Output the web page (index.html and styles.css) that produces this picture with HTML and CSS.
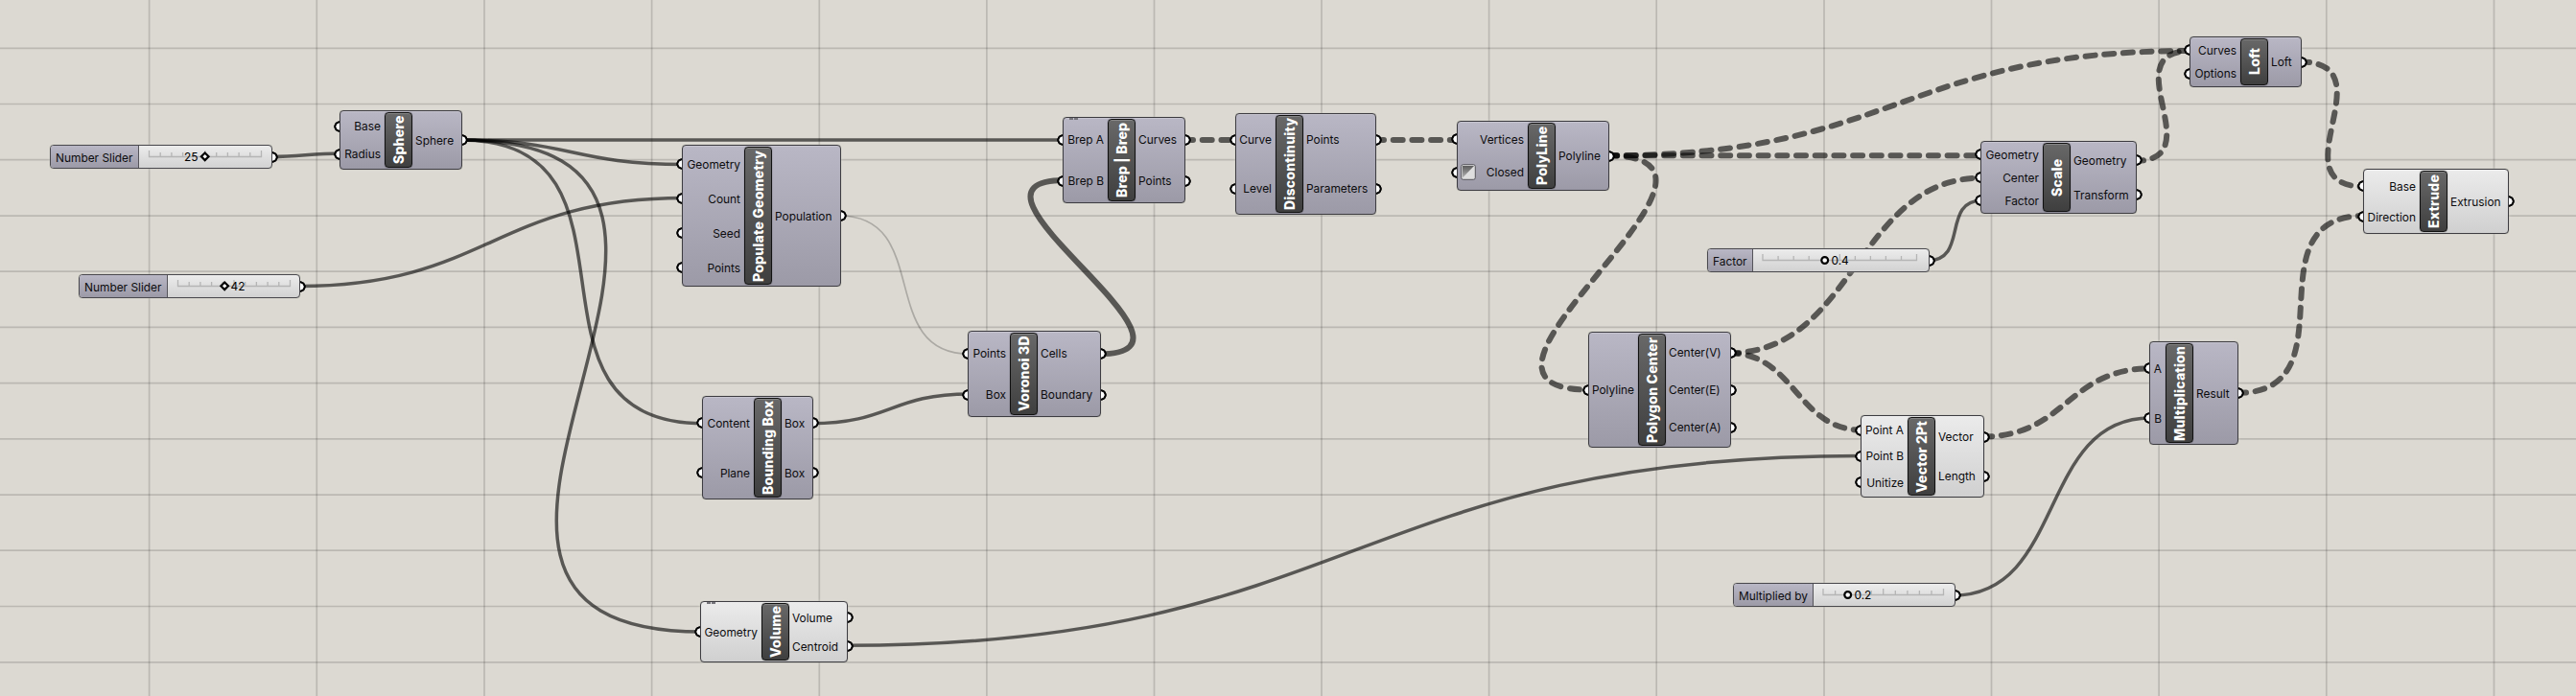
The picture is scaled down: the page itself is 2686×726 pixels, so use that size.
FILE: index.html
```html
<!DOCTYPE html>
<html lang="en">
<head>
<meta charset="utf-8">
<title>Node graph</title>
<link rel="stylesheet" href="styles.css">
</head>
<body>
<main class="canvas">
  <svg class="layer" width="2686" height="726" viewBox="0 0 2686 726">
    <path class="grid" d="M155.6 0V726M330.3 0V726M505 0V726M679.6 0V726M854.3 0V726M1028.9 0V726M1203.5 0V726M1378 0V726M1552.6 0V726M1727.2 0V726M1902 0V726M2076.5 0V726M2251.1 0V726M2425.8 0V726M2600.5 0V726"/>
    <path class="grid" d="M0 50.3H2686M0 108.5H2686M0 166.6H2686M0 225.2H2686M0 283.2H2686M0 341.4H2686M0 399.6H2686M0 457.8H2686M0 516.2H2686M0 574.2H2686M0 632.5H2686M0 690.8H2686"/>

    <g class="wire">
      <path d="M282 163.5C315 163.5 322 160 356 160"/>
      <path d="M312 298.5C508 298.5 516 206.5 713 206.5"/>
      <path d="M480 146H1110"/>
      <path d="M480 146C596 146 597 171.5 713 171.5"/>
      <path d="M480 146C693 146 521 441.7 734 441.7"/>
      <path d="M480 146C866 146 346 659 732 659"/>
      <path d="M846 441.7C928 441.7 929 411 1011 411"/>
      <path d="M882 673.3C1412 673.3 1411 475.5 1941 475.5"/>
      <path d="M2010 271.7C2053 271.7 2024 209 2067 209"/>
      <path d="M2037 621C2154 621 2125 436 2242 436"/>
    </g>
    <path class="wire thin" d="M875 225C973 225 913 369.3 1011 369.3"/>
    <path class="wire thick" d="M1146 369.3C1282 369.3 974 188 1110 188"/>
    <g class="wire dashed">
      <path d="M1234 146H1290"/>
      <path d="M1433 146H1521"/>
      <path d="M1676 162.3H2067"/>
      <path d="M1676 162.3C1980 162.3 1981 53 2285 53"/>
      <path d="M1676 162.3C1858 162.3 1476 406.7 1658 406.7"/>
      <path d="M1803 368.3C1934 368.3 1936 185.5 2067 185.5"/>
      <path d="M1803 368.3C1872 368.3 1873 448.7 1942 448.7"/>
      <path d="M2067 455.5C2155 455.5 2155 384.3 2243 384.3"/>
      <path d="M2225 168C2309 168 2201 53 2285 53"/>
      <path d="M2398 64.5C2493 64.5 2371 194.7 2466 194.7"/>
      <path d="M2332 410C2456 410 2342 225 2466 225"/>
    </g>
  </svg>

  <section class="slider slider-radius">
    <span class="name">Number Slider</span>
    <span class="track port-out">
      <svg width="140" height="24" viewBox="0 0 140 24"><path class="ticks" d="M11.500 6V12.500H128.500V6M23.200 8V12M34.900 8V12M46.600 8V12M58.300 8V12M70 6V12M81.700 8V12M93.400 8V12M105.100 8V12M116.800 8V12"/><text x="48" y="17">25</text><path class="grip" d="M69.700 8.500L73.500 12.300L69.700 16.100L65.900 12.300Z"/></svg>
    </span>
  </section>

  <section class="slider slider-count">
    <span class="name">Number Slider</span>
    <span class="track port-out">
      <svg width="140" height="24" viewBox="0 0 140 24"><path class="ticks" d="M11.500 6V12.500H128.500V6M23.200 8V12M34.900 8V12M46.600 8V12M58.300 8V12M70 6V12M81.700 8V12M93.400 8V12M105.100 8V12M116.800 8V12"/><text x="66.500" y="17">42</text><path class="grip" d="M60.200 8.500L64 12.300L60.200 16.100L56.400 12.300Z"/></svg>
    </span>
  </section>

  <section class="slider slider-factor">
    <span class="name">Factor</span>
    <span class="track port-out">
      <svg width="184" height="24" viewBox="0 0 184 24"><path class="ticks" d="M11 6V12.500H171.500V6M27.100 8V12M43.200 8V12M59.200 8V12M75.200 8V12M91.300 6V12M107.400 8V12M123.400 8V12M139.400 8V12M155.500 8V12"/><text x="82.500" y="17">0.4</text><circle class="grip" cx="75.700" cy="12.500" r="3.400"/></svg>
    </span>
  </section>

  <section class="slider slider-multiplied">
    <span class="name">Multiplied by</span>
    <span class="track port-out">
      <svg width="148" height="24" viewBox="0 0 148 24"><path class="ticks" d="M11 6V12.500H136.500V6M23.600 8V12M36.100 8V12M48.700 8V12M61.200 8V12M73.700 6V12M86.300 8V12M98.900 8V12M111.400 8V12M124 8V12"/><text x="43.500" y="17">0.2</text><circle class="grip" cx="36.700" cy="12.500" r="3.400"/></svg>
    </span>
  </section>

  <section class="node sphere">
    <div class="inputs"><span>Base</span><span>Radius</span></div>
    <h2>Sphere</h2>
    <div class="outputs"><span>Sphere</span></div>
  </section>

  <section class="node populate">
    <div class="inputs"><span>Geometry</span><span>Count</span><span>Seed</span><span>Points</span></div>
    <h2>Populate Geometry</h2>
    <div class="outputs"><span>Population</span></div>
  </section>

  <section class="node bounding">
    <div class="inputs"><span>Content</span><span>Plane</span></div>
    <h2>Bounding Box</h2>
    <div class="outputs"><span>Box</span><span>Box</span></div>
  </section>

  <section class="node light marked volume">
    <div class="inputs"><span>Geometry</span></div>
    <h2>Volume</h2>
    <div class="outputs"><span>Volume</span><span>Centroid</span></div>
  </section>

  <section class="node voronoi">
    <div class="inputs"><span>Points</span><span>Box</span></div>
    <h2>Voronoi 3D</h2>
    <div class="outputs"><span>Cells</span><span>Boundary</span></div>
  </section>

  <section class="node marked brep">
    <div class="inputs"><span>Brep A</span><span>Brep B</span></div>
    <h2>Brep | Brep</h2>
    <div class="outputs"><span>Curves</span><span>Points</span></div>
  </section>

  <section class="node discontinuity">
    <div class="inputs"><span>Curve</span><span>Level</span></div>
    <h2>Discontinuity</h2>
    <div class="outputs"><span>Points</span><span>Parameters</span></div>
  </section>

  <section class="node polyline">
    <div class="inputs"><span>Vertices</span><span><svg class="toggle" width="16" height="17" viewBox="0 0 16 17"><defs><linearGradient id="shade" x1="0" y1="0" x2="0" y2="1"><stop offset="0" stop-color="#5c5c5c"/><stop offset="1" stop-color="#b4b4b4"/></linearGradient></defs><rect x=".7" y=".7" width="14.600" height="15.600" rx="2" fill="#dedede" stroke="#55545a"/><path d="M2 2H14L2 14.500Z" fill="url(#shade)"/></svg>Closed</span></div>
    <h2>PolyLine</h2>
    <div class="outputs"><span>Polyline</span></div>
  </section>

  <section class="node polygon-center">
    <div class="inputs"><span>Polyline</span></div>
    <h2>Polygon Center</h2>
    <div class="outputs"><span>Center(V)</span><span>Center(E)</span><span>Center(A)</span></div>
  </section>

  <section class="node light vector">
    <div class="inputs"><span>Point A</span><span>Point B</span><span>Unitize</span></div>
    <h2>Vector 2Pt</h2>
    <div class="outputs"><span>Vector</span><span>Length</span></div>
  </section>

  <section class="node scale">
    <div class="inputs"><span>Geometry</span><span>Center</span><span>Factor</span></div>
    <h2>Scale</h2>
    <div class="outputs"><span>Geometry</span><span>Transform</span></div>
  </section>

  <section class="node loft">
    <div class="inputs"><span>Curves</span><span>Options</span></div>
    <h2>Loft</h2>
    <div class="outputs"><span>Loft</span></div>
  </section>

  <section class="node light extrude">
    <div class="inputs"><span>Base</span><span>Direction</span></div>
    <h2>Extrude</h2>
    <div class="outputs"><span>Extrusion</span></div>
  </section>

  <section class="node multiplication">
    <div class="inputs"><span>A</span><span>B</span></div>
    <h2>Multiplication</h2>
    <div class="outputs"><span>Result</span></div>
  </section>
</main>
</body>
</html>
```
FILE: styles.css
```css
* { box-sizing: border-box; }

body { margin: 0; }

.canvas {
  position: relative;
  width: 2686px;
  height: 726px;
  overflow: hidden;
  background: #dcd9d2;
  color: #0c0c0e;
  font: 11.9px/16px Inter, sans-serif;
}

.layer { display: block; }

.grid { fill: none; stroke: rgba(0, 0, 0, .15); stroke-width: 1.7; }

.wire { fill: none; stroke: rgba(0, 0, 0, .6); stroke-width: 3.5; }
.thin { stroke: rgba(0, 0, 0, .22); stroke-width: 1.7; }
.thick { stroke-width: 6; }
.dashed { stroke-width: 6; stroke-linecap: round; stroke-dasharray: 10 9.7; }

/* components */
.node {
  position: absolute;
  display: grid;
  grid-template-columns: var(--in) 29px 1fr;
  padding: 1px 0;
  border: 1px solid #3d3c41;
  border-radius: 4px;
  background: linear-gradient(#b9b7c5, #9c9aa7);
  box-shadow: inset 0 1px 0 rgba(255, 255, 255, .2), 0 0 1px rgba(50, 50, 50, .6), 0 0 3px rgba(240, 240, 225, .7);
}

.light { background: linear-gradient(#ebebeb, #d0d0d0); }

.inputs, .outputs { display: flex; flex-direction: column; }

.inputs span, .outputs span {
  position: relative;
  flex: 1;
  display: flex;
  align-items: center;
  padding: 1px 3px 0;
  white-space: nowrap;
}

.inputs span { justify-content: flex-end; padding-right: 4px; }

/* half-round connection grips on the node edges */
.inputs span::before, .outputs span::before, .port-out::before {
  content: "";
  position: absolute;
  top: calc(50% - 6px);
  width: 6px;
  height: 12px;
}

.inputs span::before {
  left: -7px;
  background: radial-gradient(circle at 100% 50%, #fff 3.3px, #000 3.9px 5.4px, transparent 6px);
}

.outputs span::before, .port-out::before {
  right: -7px;
  background: radial-gradient(circle at 0 50%, #fff 3.3px, #000 3.9px 5.4px, transparent 6px);
}

.node h2 {
  display: flex;
  align-items: center;
  justify-content: center;
  margin: 0;
  border: 1px solid #111;
  border-radius: 4px;
  background: linear-gradient(#3f3f3f, #686868);
  box-shadow: inset 0 -1px 0 rgba(255, 255, 255, .2), 0 0 1px rgba(0, 0, 0, .7);
  color: #fff;
  font-size: 14px;
  font-weight: 800;
  letter-spacing: .22px;
  line-height: 26px;
  white-space: nowrap;
  writing-mode: vertical-rl;
  transform: rotate(180deg);
}

.marked::after {
  content: "";
  position: absolute;
  left: 6px;
  top: 0;
  width: 9px;
  height: 2px;
  background: repeating-linear-gradient(90deg, #77767c 0 4px, transparent 4px 5px);
}

.toggle { position: absolute; left: 3px; top: calc(50% - 9px); }

/* sliders */
.slider {
  position: absolute;
  display: flex;
  height: 25px;
  border: 1px solid #4a494e;
  border-radius: 4px;
  background: linear-gradient(#ececec, #d2d2d2);
  box-shadow: 0 0 1px rgba(50, 50, 50, .6), 0 0 3px rgba(240, 240, 225, .7);
}

.name {
  display: flex;
  align-items: center;
  flex: 0 0 var(--label);
  padding: 2px 0 0 5px;
  border-right: 1px solid #55545a;
  border-radius: 3px 0 0 3px;
  background: linear-gradient(#b9b7c5, #9c9aa7);
  white-space: nowrap;
}

.track { position: relative; flex: 1; }
.track > svg { position: absolute; left: -1px; top: -1px; }
.ticks { fill: none; stroke: #b5b5b5; stroke-width: 1.3; }
.grip { fill: #fff; stroke: #000; stroke-width: 2.2; }

.slider-radius { left: 52px; top: 151px; width: 232px; --label: 92px; }
.slider-count { left: 82px; top: 286px; width: 231px; --label: 92px; }
.slider-factor { left: 1780px; top: 259px; width: 232px; --label: 47px; }
.slider-multiplied { left: 1807px; top: 608px; width: 232px; --label: 83px; }

/* canvas placement */
.sphere { left: 354px; top: 115px; width: 128px; height: 62px; --in: 46px; }
.populate { left: 711px; top: 151px; width: 166px; height: 148px; --in: 64px; }
.bounding { left: 732px; top: 413px; width: 116px; height: 108px; --in: 53px; }
.volume { left: 730px; top: 627px; width: 154px; height: 64px; --in: 63px; }
.voronoi { left: 1009px; top: 345px; width: 139px; height: 90px; --in: 43px; }
.brep { left: 1108px; top: 122px; width: 128px; height: 90px; --in: 46px; }
.discontinuity { left: 1288px; top: 118px; width: 147px; height: 106px; --in: 41px; }
.polyline { left: 1519px; top: 126px; width: 159px; height: 73px; --in: 73px; }
.polygon-center { left: 1656px; top: 346px; width: 149px; height: 121px; --in: 51px; }
.vector { left: 1940px; top: 433px; width: 129px; height: 86px; --in: 48px; }
.scale { left: 2065px; top: 147px; width: 163px; height: 76px; --in: 64px; }
.loft { left: 2283px; top: 38px; width: 117px; height: 53px; --in: 52px; }
.extrude { left: 2464px; top: 176px; width: 152px; height: 68px; --in: 58px; }
.multiplication { left: 2241px; top: 356px; width: 93px; height: 108px; --in: 16px; }
```
